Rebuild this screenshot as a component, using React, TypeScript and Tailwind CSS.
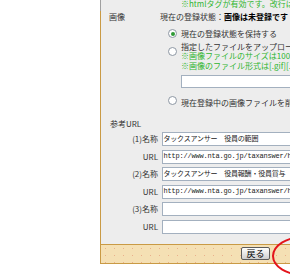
const Radio = ({ checked = false }: { checked?: boolean }) => (
  <span className="flex h-[9px] w-[9px] shrink-0 items-center justify-center rounded-full border border-[#8d97a3] bg-white">
    {checked && <span className="h-[4px] w-[4px] rounded-full bg-[#2f9a36]" />}
  </span>
);

const Field = ({ value = "" }: { value?: string }) => (
  <div className="flex h-[14px] w-[240px] items-center border border-[#a3b0bf] bg-white pl-[1px] font-['Liberation_Mono','Noto_Sans_CJK_JP',monospace] text-[7px] leading-none tracking-[-0.2px] whitespace-nowrap text-[#222]">
    {value}
  </div>
);

const refs = [
  { label: "(1)名称", value: "タックスアンサー　役員の範囲" },
  { label: "URL", value: "http://www.nta.go.jp/taxanswer/hojin/5200.htm" },
  { label: "(2)名称", value: "タックスアンサー　役員報酬・役員賞与" },
  { label: "URL", value: "http://www.nta.go.jp/taxanswer/hojin/5202.htm" },
  { label: "(3)名称", value: "" },
  { label: "URL", value: "" },
];

export default function App() {
  return (
    <div className="relative h-[280px] w-[290px] overflow-hidden bg-white font-['Noto_Sans_CJK_JP','Noto_Sans',sans-serif] text-[8px] text-[#333]">
      <div className="ml-[100px] w-[400px]">
        {/* tail of the previous row */}
        <div className="h-[11px] border-l border-[#a0a0a0] bg-[#ededed] pl-[80px] leading-[8px] whitespace-nowrap text-[#2fb52f]">
          ※htmlタグが有効です。改行は：そのまま反映されます
        </div>

        <div className="flex flex-col border-l border-[#c99a45] bg-[#ededed] pb-[10px]">
          {/* 画像 */}
          <div className="flex">
            <div className="w-[59px] shrink-0 pt-[2px] pl-[8px] leading-[8px]">画像</div>
            <div className="flex flex-col whitespace-nowrap">
              <div className="pt-[2px] leading-[8px]">
                現在の登録状態：<b className="text-black">画像は未登録です</b>
              </div>
              <div className="mt-[8px] flex items-center gap-[4px] pl-[8px] leading-[8px]">
                <Radio checked />
                <span>現在の登録状態を保持する</span>
              </div>
              <div className="mt-[5px] flex items-start gap-[4px] pl-[8px]">
                <span className="mt-[4px]">
                  <Radio />
                </span>
                <div className="flex flex-col">
                  <span className="leading-[8px]">指定したファイルをアップロードして登録する</span>
                  <span className="leading-[10px] text-[#2fb52f]">※画像ファイルのサイズは100KB以下にしてください</span>
                  <span className="leading-[10px] text-[#2fb52f]">※画像のファイル形式は[.gif][.jpg]のみ有効です</span>
                  <div className="mt-[4px] h-[13px] w-[200px] border border-[#a3b0bf] bg-white" />
                </div>
              </div>
              <div className="mt-[8px] flex items-start gap-[4px] pl-[8px]">
                <Radio />
                <span className="mt-[3px] leading-[8px]">現在登録中の画像ファイルを削除する</span>
              </div>
            </div>
          </div>

          {/* 参考URL */}
          <div className="mt-[13px] pl-[9px] leading-[8px]">参考URL</div>
          <div className="mt-[4px] grid grid-cols-[57px_1fr] gap-x-[3.5px] gap-y-[3.5px]">
            {refs.map((r, i) => (
              <div key={i} className="contents">
                <div className="flex items-center justify-end leading-[8px] whitespace-nowrap">{r.label}</div>
                <Field value={r.value} />
              </div>
            ))}
          </div>
        </div>

        {/* button bar */}
        <div className="flex h-[20px] border-y border-l border-[#c99a45] bg-[#f5e0b4] bg-[radial-gradient(circle,#eab08c_0.4px,transparent_0.8px)] bg-size-[9px_7px] pl-[140px]">
          <button className="mt-[2px] flex h-[13px] w-[29px] items-center justify-center rounded-[2px] border border-[#5a5a5a] bg-gradient-to-b from-white to-[#cfcfcf] text-[9px] leading-none text-black">
            戻る
          </button>
        </div>
      </div>

      {/* red annotation circle */}
      <div className="absolute top-[236px] left-[272px] h-[40px] w-[64px] rounded-[50%] border-2 border-[#e3141b]" />
    </div>
  );
}
